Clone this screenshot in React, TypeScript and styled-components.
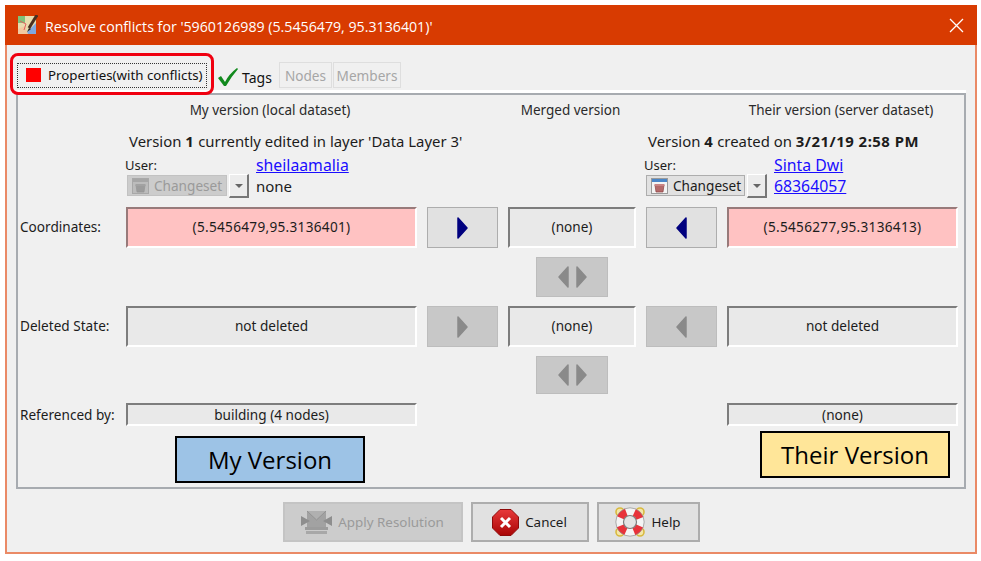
import React from 'react';
import styled, { createGlobalStyle } from 'styled-components';

const GlobalStyle = createGlobalStyle`
  html, body {
    margin: 0;
    background: #fff;
  }
`;

const Window = styled.div`
  position: relative;
  box-sizing: border-box;
  width: 972px;
  height: 549px;
  margin: 5px 0 0 5px;
  display: flex;
  flex-direction: column;
  background: #f0f0f0;
  border-left: 2px solid #ea8a66;
  border-right: 2px solid #ea8a66;
  border-bottom: 2px solid #ea8a66;
  font-family: "Noto Sans", sans-serif;
  font-size: 13.6px;
  color: #1c1c1c;
`;

const TitleBar = styled.div`
  height: 40px;
  margin: 0 -2px;
  padding: 0 13px 0 13px;
  display: flex;
  align-items: center;
  gap: 7px;
  background: #d83b01;
  color: #fff;
  font-family: "Open Sans", sans-serif;
  font-size: 14.2px;
  flex: none;
`;

const TitleText = styled.span`
  flex: 1;
  padding-top: 2px;
`;

const TabStrip = styled.div`
  height: 48px;
  margin: 0 9px;
  padding-left: 1px;
  display: flex;
  align-items: flex-end;
  box-sizing: border-box;
  border-bottom: 3px solid #fff;
  flex: none;
`;

const ActiveTab = styled.div`
  box-sizing: border-box;
  width: 190px;
  height: 25px;
  margin-bottom: 2px;
  padding: 0 0 2px 8px;
  display: flex;
  align-items: center;
  gap: 7px;
  border: 1px dotted #333;
  white-space: nowrap;
  color: #111;
  font-size: 13.3px;
`;

const RedSquare = styled.span`
  width: 15px;
  height: 14px;
  background: #ff0000;
  flex: none;
`;

const TagsTab = styled.div`
  height: 26px;
  margin-left: 10px;
  width: 61px;
  display: flex;
  align-items: center;
  gap: 3px;
  color: #111;
  font-size: 14px;
  flex: none;
`;

const DisabledTab = styled.div<{ $width: number }>`
  box-sizing: border-box;
  width: ${(p) => p.$width}px;
  height: 26px;
  margin: 0 0 2px 1px;
  display: flex;
  align-items: center;
  justify-content: center;
  border: 1px solid #dedede;
  color: #a6a6a6;
  font-size: 13.6px;
  flex: none;
`;

const Panel = styled.div`
  margin: 0 9px;
  border: 2px solid #a7abb0;
  box-sizing: border-box;
  flex: none;
`;

const ConflictGrid = styled.div`
  display: grid;
  grid-template-columns: 96px 291px 71px 128px 71px 231px;
  grid-template-rows: 20px 69px 41px 40px 41px 38px 23px;
  column-gap: 10px;
  row-gap: 9px;
  padding: 5px 0 61px 2px;
`;

const ColumnHeader = styled.div<{ $col: number }>`
  grid-column: ${(p) => p.$col};
  grid-row: 1;
  padding-right: 3px;
  display: flex;
  align-items: center;
  justify-content: center;
  white-space: nowrap;
  color: #2a2a2a;
  font-size: 13.5px;
`;

const VersionInfo = styled.div<{ $col: string; $shift: number; $split: number }>`
  grid-column: ${(p) => p.$col};
  grid-row: 2;
  margin-left: ${(p) => p.$shift}px;
  display: grid;
  grid-template-columns: ${(p) => p.$split}px 1fr;
  grid-template-rows: 23px 3px 19px 24px;
`;

const VersionLine = styled.div`
  grid-column: 1 / 3;
  grid-row: 1;
  padding-left: 4px;
  display: flex;
  align-items: center;
  white-space: pre;
  font-size: 14.9px;

  b {
    letter-spacing: 0.5px;
  }
`;

const UserLabel = styled.div`
  grid-column: 1;
  grid-row: 3;
  display: flex;
  align-items: center;
  font-size: 13px;
`;

const LinkText = styled.a<{ $row: number }>`
  grid-column: 2;
  grid-row: ${(p) => p.$row};
  display: flex;
  align-items: center;
  color: #1a0dff;
  text-decoration: underline;
  font-size: 15.8px;
`;

const PlainValue = styled.div`
  grid-column: 2;
  grid-row: 4;
  display: flex;
  align-items: center;
  font-size: 15px;
`;

const ChangesetGroup = styled.div`
  grid-column: 1;
  grid-row: 4;
  display: flex;
  gap: 2px;
  margin-left: 2px;
  align-items: flex-start;
`;

const ChangesetButton = styled.div<{ $disabled?: boolean }>`
  box-sizing: border-box;
  width: ${(p) => (p.$disabled ? 100 : 99)}px;
  height: 21px;
  margin-top: 1px;
  padding-left: 4px;
  display: flex;
  align-items: center;
  gap: 5px;
  background: ${(p) => (p.$disabled ? '#cccccc' : '#e1e1e1')};
  border: 1px solid ${(p) => (p.$disabled ? '#c2c2c2' : '#adadad')};
  color: ${(p) => (p.$disabled ? '#9a9a9a' : '#1c1c1c')};
  font-size: 13.6px;
  white-space: nowrap;
`;

const DropButton = styled.div`
  box-sizing: border-box;
  width: 20px;
  height: 24px;
  display: flex;
  align-items: center;
  justify-content: center;
  background: #ececec;
  border-right: 2px solid #777;
  border-bottom: 2px solid #777;
  border-top: 1px solid #fff;
  border-left: 1px solid #fff;
`;

const DropCaret = styled.span`
  width: 0;
  height: 0;
  border-left: 4px solid transparent;
  border-right: 4px solid transparent;
  border-top: 4px solid #666;
`;

const RowLabel = styled.div<{ $row: number; $low?: boolean }>`
  grid-column: 1;
  grid-row: ${(p) => p.$row};
  padding-bottom: ${(p) => (p.$low ? 0 : 2)}px;
  display: flex;
  align-items: center;
  white-space: nowrap;
  font-size: 13.6px;
`;

const ValueField = styled.div<{ $col: number; $row: number; $conflict?: boolean; $low?: boolean }>`
  grid-column: ${(p) => p.$col};
  grid-row: ${(p) => p.$row};
  box-sizing: border-box;
  padding-bottom: ${(p) => (p.$low ? 0 : 2)}px;
  display: flex;
  align-items: center;
  justify-content: center;
  background: ${(p) => (p.$conflict ? '#ffc2c2' : '#e9e9e9')};
  border-style: solid;
  border-width: 2px;
  border-color: ${(p) => (p.$conflict ? '#987a7a' : '#7d7d7d')} #fff #fff ${(p) => (p.$conflict ? '#987a7a' : '#7d7d7d')};
  font-size: 13.6px;
  letter-spacing: ${(p) => (p.$conflict ? '0.3px' : '0')};
  white-space: nowrap;
`;

const ArrowButton = styled.div<{ $col: number; $row: number; $disabled?: boolean }>`
  grid-column: ${(p) => p.$col};
  grid-row: ${(p) => p.$row};
  box-sizing: border-box;
  display: flex;
  align-items: center;
  justify-content: center;
  gap: 7px;
  background: ${(p) => (p.$disabled ? '#c8c8c8' : '#e1e1e1')};
  border: 1px solid ${(p) => (p.$disabled ? '#bdbdbd' : '#adadad')};
`;

const MergeButton = styled(ArrowButton)`
  width: 72px;
  justify-self: center;
`;

const ButtonBar = styled.div`
  flex: 1;
  display: flex;
  align-items: flex-start;
  justify-content: center;
  gap: 8px;
  padding-top: 13px;
`;

const DialogButton = styled.div<{ $width: number; $disabled?: boolean }>`
  box-sizing: border-box;
  width: ${(p) => p.$width}px;
  height: 40px;
  display: flex;
  align-items: center;
  justify-content: center;
  gap: 6px;
  background: ${(p) => (p.$disabled ? '#cccccc' : '#e1e1e1')};
  border: 2px solid ${(p) => (p.$disabled ? '#c4c4c4' : '#adadad')};
  color: ${(p) => (p.$disabled ? '#9a9a9a' : '#1c1c1c')};
  font-size: 13.4px;
`;

// annotations added on top of the dialog screenshot
const RedOutline = styled.div`
  position: absolute;
  left: 3px;
  top: 48px;
  width: 204px;
  height: 42px;
  box-sizing: border-box;
  border: 3px solid #f00010;
  border-radius: 8px;
`;

const Callout = styled.div<{ $left: number; $top: number; $fill: string }>`
  position: absolute;
  left: ${(p) => p.$left}px;
  top: ${(p) => p.$top}px;
  width: 190px;
  height: 47px;
  box-sizing: border-box;
  display: flex;
  align-items: center;
  justify-content: center;
  background: ${(p) => p.$fill};
  border: 2px solid #000;
  color: #000;
  font-family: "Open Sans", sans-serif;
  font-size: 24px;
`;

const AppLogo = () => (
  <svg width="20" height="20" viewBox="0 0 20 20">
    <rect x="0" y="1" width="18" height="18" fill="#e8dcae" />
    <rect x="0" y="1" width="7" height="7" fill="#7fc27a" />
    <path d="M7 19 L18 8 V19Z" fill="#7fa8e0" />
    <path d="M0 14 L7 11 L10 19 L0 19Z" fill="#f2c9a0" />
    <path d="M2 6 L8 9 L6 15" stroke="#e06060" strokeWidth="1" fill="none" />
    <path d="M19 0 L11 13" stroke="#4a3020" strokeWidth="3" />
    <path d="M11 13 L9 17 L13 14Z" fill="#222" />
  </svg>
);

const CheckMark = () => (
  <svg width="22" height="20" viewBox="0 0 22 20">
    <path d="M1 11 L4 9 L8 15 Q12 7 20 1 L21 2 Q14 10 9 19 L7 19Z" fill="#128a1e" />
  </svg>
);

const CloseIcon = () => (
  <svg width="15" height="15" viewBox="0 0 15 15">
    <path d="M1 1 L14 14 M14 1 L1 14" stroke="#fff" strokeWidth="1.3" />
  </svg>
);

const Triangle = ({ dir, color }: { dir: 'l' | 'r'; color: string }) => (
  <svg width="11" height="22" viewBox="0 0 11 22">
    <path
      d={dir === 'r' ? 'M1 1 L10 11 L1 21Z' : 'M10 1 L1 11 L10 21Z'}
      fill={color}
      stroke={color}
      strokeWidth="1.5"
      strokeLinejoin="round"
    />
  </svg>
);

const ChangesetIcon = ({ off }: { off?: boolean }) => (
  <svg width="17" height="16" viewBox="0 0 17 16">
    <rect x="0.5" y="0.5" width="16" height="15" fill={off ? '#bcbcbc' : '#f4f4f4'} stroke={off ? '#a8a8a8' : '#9a9a9a'} />
    <rect x="1" y="1" width="15" height="3" fill={off ? '#a6a6a6' : '#4a86c8'} />
    <path d="M4 7 H13 L12 14 H5Z" fill={off ? '#9c9c9c' : '#b56a6a'} stroke={off ? '#969696' : '#8a4444'} strokeWidth="0.7" />
    <rect x="3.5" y="6" width="10" height="2" fill={off ? '#a2a2a2' : '#c98484'} />
  </svg>
);

const ApplyIcon = () => (
  <svg width="31" height="25" viewBox="0 0 31 25">
    <path d="M6 1 H25 V17 H6Z" fill="#a2a2a2" />
    <path d="M6 1 L15.5 10 L25 1" fill="#b0b0b0" stroke="#939393" />
    <path d="M0 6 L9 11 L0 16Z M31 6 L22 11 L31 16Z" fill="#8e8e8e" />
    <rect x="4" y="17" width="23" height="3" fill="#9c9c9c" />
    <rect x="5" y="21" width="21" height="3" fill="#a8a8a8" />
  </svg>
);

const CancelIcon = () => (
  <svg width="27" height="27" viewBox="0 0 27 27">
    <defs>
      <linearGradient id="stopFill" x1="0" y1="0" x2="0" y2="1">
        <stop offset="0" stopColor="#e8393a" />
        <stop offset="1" stopColor="#a80505" />
      </linearGradient>
    </defs>
    <path d="M8 0.5 H19 L26.5 8 V19 L19 26.5 H8 L0.5 19 V8Z" fill="url(#stopFill)" stroke="#8e0a0a" />
    <path d="M9 9 L18 18 M18 9 L9 18" stroke="#fff" strokeWidth="3" />
  </svg>
);

const HelpIcon = () => (
  <svg width="30" height="30" viewBox="0 0 30 30">
    <g stroke="#d8b93e" strokeWidth="1.6" fill="#f4e6a8">
      <circle cx="5" cy="5" r="4" />
      <circle cx="25" cy="5" r="4" />
      <circle cx="5" cy="25" r="4" />
      <circle cx="25" cy="25" r="4" />
    </g>
    <circle cx="15" cy="15" r="10.5" fill="none" stroke="#f4f4f4" strokeWidth="7.5" />
    <circle cx="15" cy="15" r="10.5" fill="none" stroke="#e8323a" strokeWidth="7.5" strokeDasharray="8.25 8.25" strokeDashoffset="-4.125" />
    <circle cx="15" cy="15" r="6.5" fill="#e4e4e4" stroke="#7c7c7c" strokeWidth="1.2" />
    <circle cx="15" cy="15" r="14.2" fill="none" stroke="#8c8c8c" strokeWidth="0.7" />
  </svg>
);

export default function App() {
  return (
    <>
      <GlobalStyle />
      <Window>
        <TitleBar>
          <AppLogo />
          <TitleText>Resolve conflicts for '5960126989 (5.5456479, 95.3136401)'</TitleText>
          <CloseIcon />
        </TitleBar>
        <TabStrip>
          <ActiveTab>
            <RedSquare />
            Properties(with conflicts)
          </ActiveTab>
          <TagsTab>
            <CheckMark />
            Tags
          </TagsTab>
          <DisabledTab $width={53}>Nodes</DisabledTab>
          <DisabledTab $width={68}>Members</DisabledTab>
        </TabStrip>
        <Panel>
          <ConflictGrid>
            <ColumnHeader $col={2}>My version (local dataset)</ColumnHeader>
            <ColumnHeader $col={4}>Merged version</ColumnHeader>
            <ColumnHeader $col={6}>Their version (server dataset)</ColumnHeader>

            <VersionInfo $col="2 / 4" $shift={-1} $split={131}>
              <VersionLine>
                <span>
                  Version <b>1</b> currently edited in layer 'Data Layer 3'
                </span>
              </VersionLine>
              <UserLabel>User:</UserLabel>
              <LinkText $row={3}>sheilaamalia</LinkText>
              <ChangesetGroup>
                <ChangesetButton $disabled>
                  <ChangesetIcon off />
                  Changeset
                </ChangesetButton>
                <DropButton>
                  <DropCaret />
                </DropButton>
              </ChangesetGroup>
              <PlainValue>none</PlainValue>
            </VersionInfo>

            <VersionInfo $col="5 / 7" $shift={-2} $split={130}>
              <VersionLine>
                <span>
                  Version <b>4</b> created on <b>3/21/19 2:58 PM</b>
                </span>
              </VersionLine>
              <UserLabel>User:</UserLabel>
              <LinkText $row={3}>Sinta Dwi</LinkText>
              <ChangesetGroup>
                <ChangesetButton>
                  <ChangesetIcon />
                  Changeset
                </ChangesetButton>
                <DropButton>
                  <DropCaret />
                </DropButton>
              </ChangesetGroup>
              <LinkText $row={4}>68364057</LinkText>
            </VersionInfo>

            <RowLabel $row={3}>Coordinates:</RowLabel>
            <ValueField $col={2} $row={3} $conflict>(5.5456479,95.3136401)</ValueField>
            <ArrowButton $col={3} $row={3}>
              <Triangle dir="r" color="#00007f" />
            </ArrowButton>
            <ValueField $col={4} $row={3}>(none)</ValueField>
            <ArrowButton $col={5} $row={3}>
              <Triangle dir="l" color="#00007f" />
            </ArrowButton>
            <ValueField $col={6} $row={3} $conflict>(5.5456277,95.3136413)</ValueField>

            <MergeButton $col={4} $row={4} $disabled>
              <Triangle dir="l" color="#8a8a8a" />
              <Triangle dir="r" color="#8a8a8a" />
            </MergeButton>

            <RowLabel $row={5}>Deleted State:</RowLabel>
            <ValueField $col={2} $row={5}>not deleted</ValueField>
            <ArrowButton $col={3} $row={5} $disabled>
              <Triangle dir="r" color="#8a8a8a" />
            </ArrowButton>
            <ValueField $col={4} $row={5}>(none)</ValueField>
            <ArrowButton $col={5} $row={5} $disabled>
              <Triangle dir="l" color="#8a8a8a" />
            </ArrowButton>
            <ValueField $col={6} $row={5}>not deleted</ValueField>

            <MergeButton $col={4} $row={6} $disabled>
              <Triangle dir="l" color="#8a8a8a" />
              <Triangle dir="r" color="#8a8a8a" />
            </MergeButton>

            <RowLabel $row={7} $low>Referenced by:</RowLabel>
            <ValueField $col={2} $row={7} $low>building (4 nodes)</ValueField>
            <ValueField $col={6} $row={7} $low>(none)</ValueField>
          </ConflictGrid>
        </Panel>
        <ButtonBar>
          <DialogButton $width={180} $disabled>
            <ApplyIcon />
            Apply Resolution
          </DialogButton>
          <DialogButton $width={118}>
            <CancelIcon />
            Cancel
          </DialogButton>
          <DialogButton $width={103}>
            <HelpIcon />
            Help
          </DialogButton>
        </ButtonBar>
        <RedOutline />
        <Callout $left={168} $top={431} $fill="#9dc3e6">My Version</Callout>
        <Callout $left={753} $top={426} $fill="#ffe699">Their Version</Callout>
      </Window>
    </>
  );
}
